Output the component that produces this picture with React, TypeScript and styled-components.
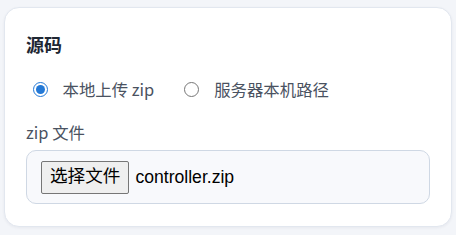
import React from "react";
import styled, { createGlobalStyle } from "styled-components";

const Global = createGlobalStyle`
  html, body { margin: 0; padding: 0; background: #f3f5f9; }
  body { font-family: "Noto Sans CJK SC", "Noto Sans", sans-serif; }
  * { box-sizing: border-box; }
`;

const Page = styled.div`
  padding: 7px 4px 8px 4px;
`;

const Card = styled.section`
  background: #ffffff;
  border: 1px solid #e2e7ef;
  border-radius: 15px;
  box-shadow: 0 1px 3px rgba(30, 40, 60, 0.06);
  padding: 24px 21px 0 21px;
  height: 220px;
  display: flex;
  flex-direction: column;
  & > * { flex-shrink: 0; }
`;

const Title = styled.h2`
  margin: 0;
  font-size: 18px;
  line-height: 24px;
  font-weight: 700;
  color: #1e2733;
`;

const RadioRow = styled.div`
  display: flex;
  align-items: center;
  gap: 30px;
  margin-top: 22px;
  padding-left: 6.5px;
`;

const RadioLabel = styled.label`
  display: flex;
  align-items: center;
  gap: 15px;
  font-size: 16.4px;
  line-height: 22px;
  color: #4a5261;
`;

const Radio = styled.input.attrs({ type: "radio" })`
  width: 15px;
  height: 15px;
  margin: 0;
  accent-color: #2479d6;
`;

const FieldLabel = styled.div`
  margin-top: 21px;
  font-size: 16.4px;
  line-height: 22px;
  color: #4a5261;
`;

const FileBox = styled.div`
  margin-top: 7px;
  width: 404px;
  height: 54px;
  border: 1px solid #cfd8e4;
  border-radius: 10px;
  background: #f8f9fc;
  display: flex;
  align-items: center;
  padding: 0 14px;
  gap: 6px;
  font-family: "Liberation Sans", "Noto Sans CJK SC", sans-serif;
  font-size: 17.6px;
`;

const ChooseButton = styled.button`
  height: 33px;
  padding: 0 8px;
  border: 1px solid #767676;
  border-radius: 2px;
  background: #efefef;
  color: #000;
  font-family: "Liberation Sans", "Noto Sans CJK SC", sans-serif;
  font-size: 17.6px;
  line-height: 1;
`;

const FileName = styled.span`
  color: #000;
`;

export default function App() {
  return (
    <>
      <Global />
      <Page>
        <Card>
          <Title>源码</Title>
          <RadioRow>
            <RadioLabel>
              <Radio name="src" defaultChecked />
              本地上传 zip
            </RadioLabel>
            <RadioLabel>
              <Radio name="src" />
              服务器本机路径
            </RadioLabel>
          </RadioRow>
          <FieldLabel>zip 文件</FieldLabel>
          <FileBox>
            <ChooseButton type="button">选择文件</ChooseButton>
            <FileName>controller.zip</FileName>
          </FileBox>
        </Card>
      </Page>
    </>
  );
}
